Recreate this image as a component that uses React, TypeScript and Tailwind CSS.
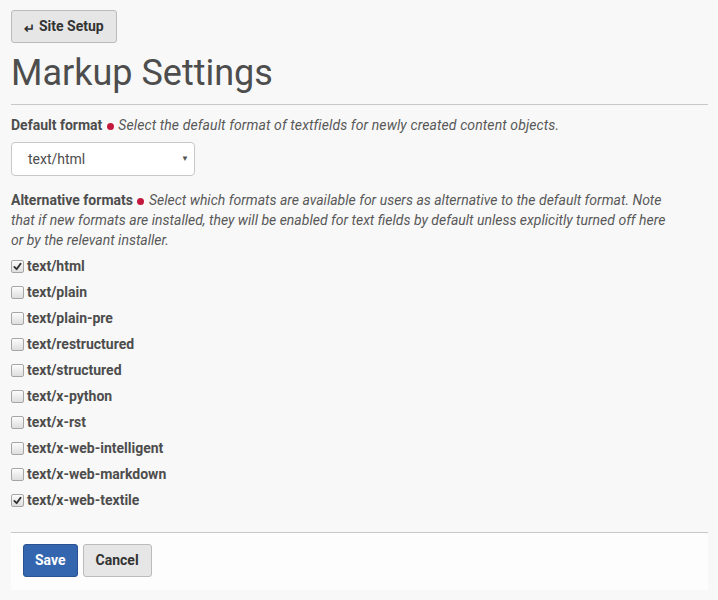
import React, { useState } from "react";

const formats = [
  "text/html",
  "text/plain",
  "text/plain-pre",
  "text/restructured",
  "text/structured",
  "text/x-python",
  "text/x-rst",
  "text/x-web-intelligent",
  "text/x-web-markdown",
  "text/x-web-textile",
];

function Check({ checked, onChange }: { checked: boolean; onChange: () => void }) {
  return (
    <span
      onClick={onChange}
      className="w-[13px] h-[13px] rounded-[2px] border border-[#a6a6a6] bg-gradient-to-b from-[#fcfcfc] to-[#dedede] flex items-center justify-center shrink-0 cursor-pointer"
    >
      {checked && (
        <svg width="9" height="9" viewBox="0 0 10 10">
          <path d="M1.5 5.5 L4 8 L8.5 1.8" fill="none" stroke="#333" strokeWidth="2" strokeLinecap="round" strokeLinejoin="round" />
        </svg>
      )}
    </span>
  );
}

export default function App() {
  const [selected, setSelected] = useState<string[]>(["text/html", "text/x-web-textile"]);

  const toggle = (f: string) => {
    if (selected.includes(f)) {
      setSelected(selected.filter(v => v !== f));
    } else {
      setSelected([...selected, f]);
    }
  };

  return (
    <div className="min-h-[600px] bg-[#f8f8f8] text-[#4d4d4d] text-[14px] font-['Roboto',sans-serif] px-[11px] pt-[10px] pr-[10px]">
      {/* back button */}
      <button
        type="button"
        className="h-[33px] px-[12px] bg-[#e6e6e6] border border-[#bbbbbb] rounded-[3px] font-bold text-[14px] text-[#333] flex items-center"
      >
        <span className="text-[13px] mr-[4px] mt-[4px]">↵</span>
        Site Setup
      </button>

      <h1 className="text-[36px] leading-[44px] mt-[8px] text-[#4d4d4d]">Markup Settings</h1>
      <div className="border-t border-[#c8c8c8] mt-[9px]" />

      {/* default format */}
      <div className="mt-[10px] leading-[20px]">
        <span className="font-bold">Default format</span>{" "}
        <span className="inline-block w-[7px] h-[7px] rounded-full bg-[#c4183c] align-middle mx-[1px]" />{" "}
        <span className="italic text-[#585858] tracking-[0.1px]">Select the default format of textfields for newly created content objects.</span>
      </div>
      <div className="mt-[7px] w-[184px] h-[34px] bg-white border border-[#c8c8c8] rounded-[4px] flex items-center justify-between pl-[16px] pr-[5px]">
        <span className="text-[#4d4d4d]">text/html</span>
        <span className="text-[8px] text-[#555]">▼</span>
      </div>

      {/* alternative formats */}
      <div className="mt-[14px] leading-[20px] max-w-[670px]">
        <span className="font-bold">Alternative formats</span>{" "}
        <span className="inline-block w-[7px] h-[7px] rounded-full bg-[#c4183c] align-middle mx-[1px]" />{" "}
        <span className="italic text-[#585858]">
          Select which formats are available for users as alternative to the default format. Note that if new formats are installed, they will be enabled for text fields by default unless explicitly turned off here or by the relevant installer.
        </span>
      </div>

      <div className="mt-[3px] flex flex-col">
        {formats.map(f => (
          <label key={f} className="h-[26px] flex items-center gap-[3px] cursor-pointer">
            <Check checked={selected.includes(f)} onChange={() => toggle(f)} />
            <span className="font-bold">{f}</span>
          </label>
        ))}
      </div>

      {/* footer */}
      <div className="mt-[19px] border-t border-[#c8c8c8] bg-[#fdfdfd] h-[58px] flex items-start pt-[11px] gap-[5px] px-[12px]">
        <button
          type="button"
          className="h-[33px] px-[11px] bg-[#3465af] border border-[#2a5291] rounded-[3px] text-white font-bold"
        >
          Save
        </button>
        <button
          type="button"
          className="h-[33px] px-[12px] bg-[#e6e6e6] border border-[#bbbbbb] rounded-[3px] text-[#333] font-bold"
        >
          Cancel
        </button>
      </div>
    </div>
  );
}
